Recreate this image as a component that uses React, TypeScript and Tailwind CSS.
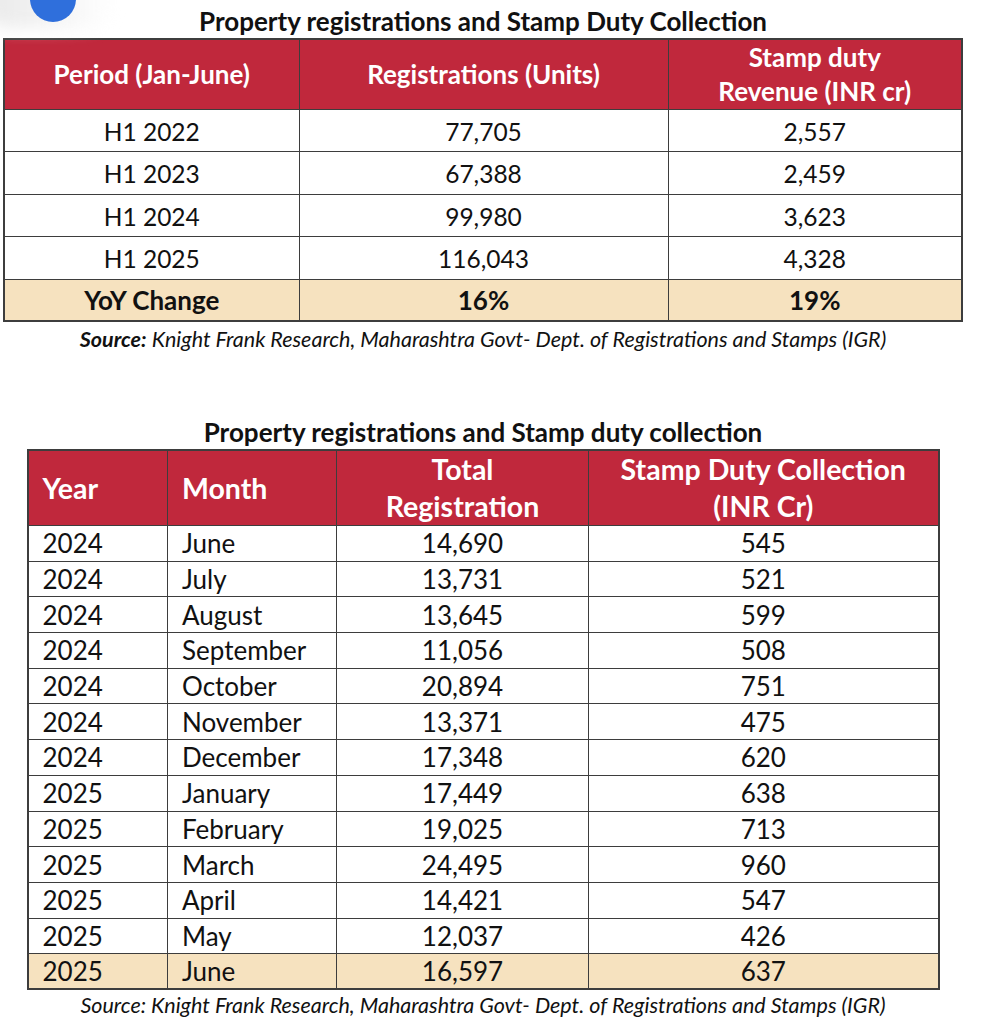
import type React from "react";

const FONT = { fontFamily: "Lato, 'Open Sans', sans-serif" };

const summary = [
  ["H1 2022", "77,705", "2,557"],
  ["H1 2023", "67,388", "2,459"],
  ["H1 2024", "99,980", "3,623"],
  ["H1 2025", "116,043", "4,328"],
];

const monthly = [
  ["2024", "June", "14,690", "545"],
  ["2024", "July", "13,731", "521"],
  ["2024", "August", "13,645", "599"],
  ["2024", "September", "11,056", "508"],
  ["2024", "October", "20,894", "751"],
  ["2024", "November", "13,371", "475"],
  ["2024", "December", "17,348", "620"],
  ["2025", "January", "17,449", "638"],
  ["2025", "February", "19,025", "713"],
  ["2025", "March", "24,495", "960"],
  ["2025", "April", "14,421", "547"],
  ["2025", "May", "12,037", "426"],
  ["2025", "June", "16,597", "637"],
];

const cell = "border-[1.5px] border-[#3d3d3d]";

const App: React.FC = () => {
  return (
    <div className="relative w-[991px] h-[1024px] bg-white overflow-hidden text-[#111]" style={FONT}>
      {/* floating button peeking in from the top */}
      <div className="absolute -left-4 -top-6 w-[130px] h-[52px] rounded-full bg-gradient-to-r from-[#e9e9e9] via-[#f3f3f3] to-transparent blur-sm" />
      <div className="absolute left-[30px] -top-[24px] w-[46px] h-[46px] rounded-full bg-[#2f6fdc]" />

      <div className="w-[966px] flex flex-col items-center">
        {/* Table 1 */}
        <h2 className="relative mt-[5px] h-[33px] text-[26px] font-bold leading-[33px]">
          Property registrations and Stamp Duty Collection
        </h2>
        <table className="w-[960px] border-collapse border-2 border-[#3d3d3d] text-[24.5px] table-fixed">
          <colgroup>
            <col className="w-[295px]" />
            <col className="w-[369px]" />
            <col />
          </colgroup>
          <thead>
            <tr className="h-[70px] bg-[#c0283c] text-white font-bold leading-[34px] text-[26px]">
              <th className={cell}>Period (Jan-June)</th>
              <th className={cell}>Registrations (Units)</th>
              <th className={cell}>
                Stamp duty
                <br />
                Revenue (INR cr)
              </th>
            </tr>
          </thead>
          <tbody>
            {summary.map((r) => (
              <tr key={r[0]} className="h-[42.5px] text-center leading-[32px]">
                {r.map((v, i) => (
                  <td key={i} className={`${cell} pt-[3px]`}>
                    {v}
                  </td>
                ))}
              </tr>
            ))}
            <tr className="h-[42px] bg-[#f6e2bf] text-center font-bold text-[26px] leading-[32px]">
              <td className={cell}>YoY Change</td>
              <td className={cell}>16%</td>
              <td className={cell}>19%</td>
            </tr>
          </tbody>
        </table>
        <p className="mt-[3px] text-[21.5px] italic leading-[28px]">
          <span className="font-bold">Source:</span> Knight Frank Research, Maharashtra Govt- Dept. of
          Registrations and Stamps (IGR)
        </p>

        {/* Table 2 */}
        <h2 className="mt-[62px] h-[34px] text-[26px] font-bold leading-[34px]">
          Property registrations and Stamp duty collection
        </h2>
        <table className="w-[913px] border-collapse border-2 border-[#3d3d3d] text-[26px] table-fixed">
          <colgroup>
            <col className="w-[140px]" />
            <col className="w-[169px]" />
            <col className="w-[252px]" />
            <col />
          </colgroup>
          <thead>
            <tr className="h-[75px] bg-[#c0283c] text-white font-bold leading-[37px] text-[28.5px]">
              <th className={`${cell} text-left pl-[14px]`}>Year</th>
              <th className={`${cell} text-left pl-[14px]`}>Month</th>
              <th className={cell}>
                Total
                <br />
                Registration
              </th>
              <th className={cell}>
                Stamp Duty Collection
                <br />
                (INR Cr)
              </th>
            </tr>
          </thead>
          <tbody>
            {monthly.map((r, idx) => (
              <tr
                key={idx}
                className={`h-[35.7px] leading-[32px] ${idx === monthly.length - 1 ? "bg-[#f6e2bf]" : ""}`}
              >
                <td className={`${cell} pl-[14px]`}>{r[0]}</td>
                <td className={`${cell} pl-[14px]`}>{r[1]}</td>
                <td className={`${cell} text-center`}>{r[2]}</td>
                <td className={`${cell} text-center`}>{r[3]}</td>
              </tr>
            ))}
          </tbody>
        </table>
        <p className="mt-[1px] text-[21.5px] italic leading-[28px]">
          Source: Knight Frank Research, Maharashtra Govt- Dept. of Registrations and Stamps (IGR)
        </p>
      </div>
    </div>
  );
};

export default App;
